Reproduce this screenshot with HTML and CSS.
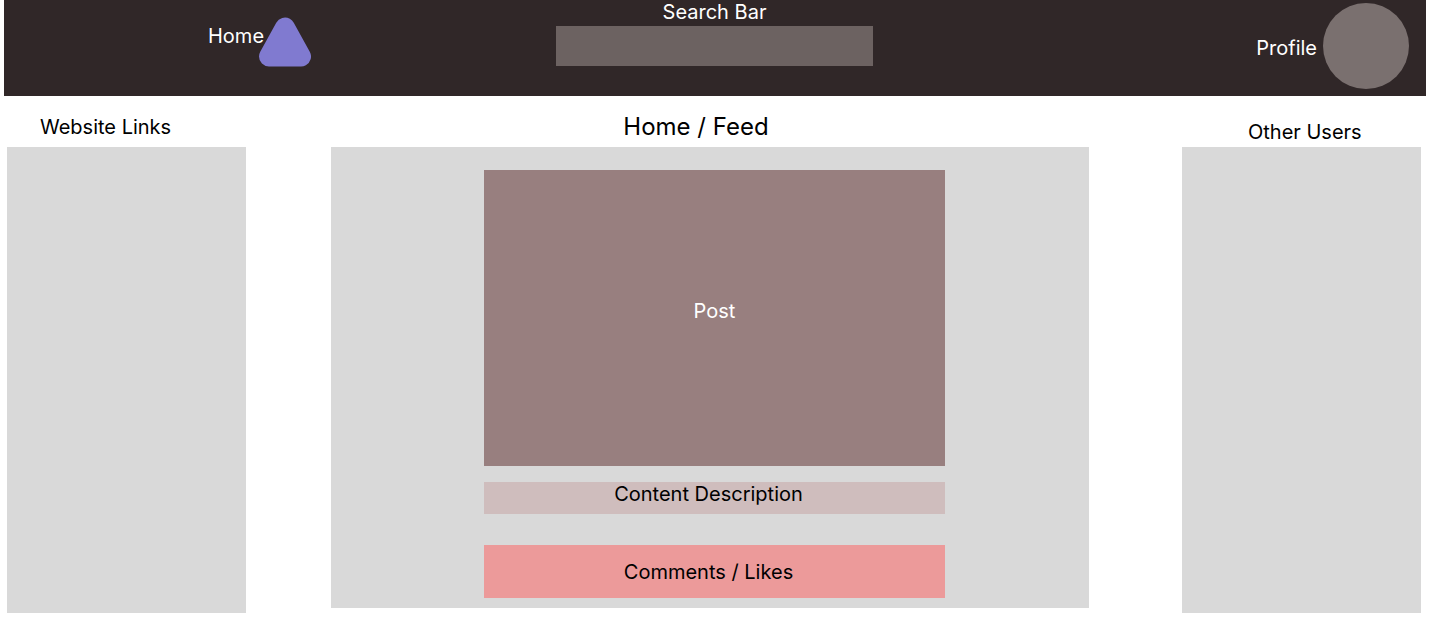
FILE: index.html
```html
<!DOCTYPE html>
<html lang="en">
<head>
<meta charset="utf-8">
<meta name="viewport" content="width=device-width, initial-scale=1">
<title>Home / Feed</title>
<link rel="stylesheet" href="styles.css">
</head>
<body>
<header class="topbar">
  <a class="home" href="#">
    <span>Home</span>
    <svg class="logo" viewBox="0 0 52 50" aria-hidden="true"><path d="M26 10.500 42 39.500H10Z" fill="#807ad0" stroke="#807ad0" stroke-width="20" stroke-linejoin="round"/></svg>
  </a>
  <form class="search" role="search">
    <label class="search-label" for="search">Search Bar</label>
    <input class="search-input" id="search" type="search">
  </form>
  <a class="profile" href="#">
    <span class="profile-label">Profile</span>
    <span class="avatar"></span>
  </a>
</header>
<main class="layout">
  <nav class="side" aria-labelledby="links-title">
    <h2 class="side-title links-title" id="links-title">Website Links</h2>
    <div class="side-panel"></div>
  </nav>
  <section class="feed">
    <h1 class="feed-title">Home / Feed</h1>
    <article class="feed-panel">
      <div class="post">Post</div>
      <p class="description">Content Description</p>
      <div class="comments">Comments / Likes</div>
    </article>
  </section>
  <aside class="side">
    <h2 class="side-title users-title">Other Users</h2>
    <div class="side-panel"></div>
  </aside>
</main>
</body>
</html>
```
FILE: styles.css
```css
* { box-sizing: border-box; }

body {
  margin: 0;
  background: #fff;
  color: #000;
  font: 400 20px/24px Inter, "Liberation Sans", sans-serif;
}

h1, h2, p { margin: 0; font-weight: 400; }

.topbar {
  display: grid;
  grid-template-columns: 1fr 317px 1fr;
  min-height: 96px;
  margin: 0 4px;
  padding-right: 1px;
  background: #302728;
  color: #fff;
}

.topbar a { color: inherit; text-decoration: none; }

.home {
  display: flex;
  align-items: flex-start;
  justify-self: start;
  margin-left: 204px;
  padding-top: 17px;
}

.home span { padding-top: 7px; }

.logo {
  width: 52px;
  height: 50px;
  margin-left: -5px;
}

.search { display: flex; flex-direction: column; }

.search-label { padding-bottom: 2px; text-align: center; }

.search-input {
  width: 100%;
  height: 40px;
  padding: 0 12px;
  border: 0;
  border-radius: 0;
  background: #6c6261;
  color: #fff;
  font: inherit;
  appearance: none;
}

.profile {
  display: flex;
  align-items: center;
  align-self: start;
  justify-self: end;
  gap: 6px;
  padding: 3px 16px 0 0;
}

.profile-label { padding-top: 4px; }

.avatar {
  width: 86px;
  height: 86px;
  border-radius: 50%;
  background: #7a706f;
}

.layout {
  display: grid;
  grid-template-columns: 239px minmax(0, 1fr) 239px;
  align-items: start;
  padding: 0 9px 6px 7px;
}

.side-title { height: 51px; font-size: 20px; }
.links-title { padding: 19px 0 0 33px; }
.users-title { padding: 24px 0 0 66px; }

.side-panel { min-height: 466px; background: #d9d9d9; }

.feed { margin: 0 93px 0 85px; }

.feed-title {
  height: 51px;
  padding: 16px 28px 0 0;
  font-size: 24px;
  line-height: 30px;
  text-align: center;
}

.feed-panel {
  padding: 23px 144px 10px 153px;
  background: #d9d9d9;
  text-align: center;
}

.post {
  display: grid;
  place-items: center;
  min-height: 296px;
  padding-bottom: 14px;
  background: #987f7f;
  color: #fff;
}

.description {
  min-height: 32px;
  margin: 16px 0 31px;
  padding-right: 12px;
  background: #cfbdbd;
}

.comments {
  padding: 15px 12px 14px 0;
  background: #ec9a9a;
}
```
